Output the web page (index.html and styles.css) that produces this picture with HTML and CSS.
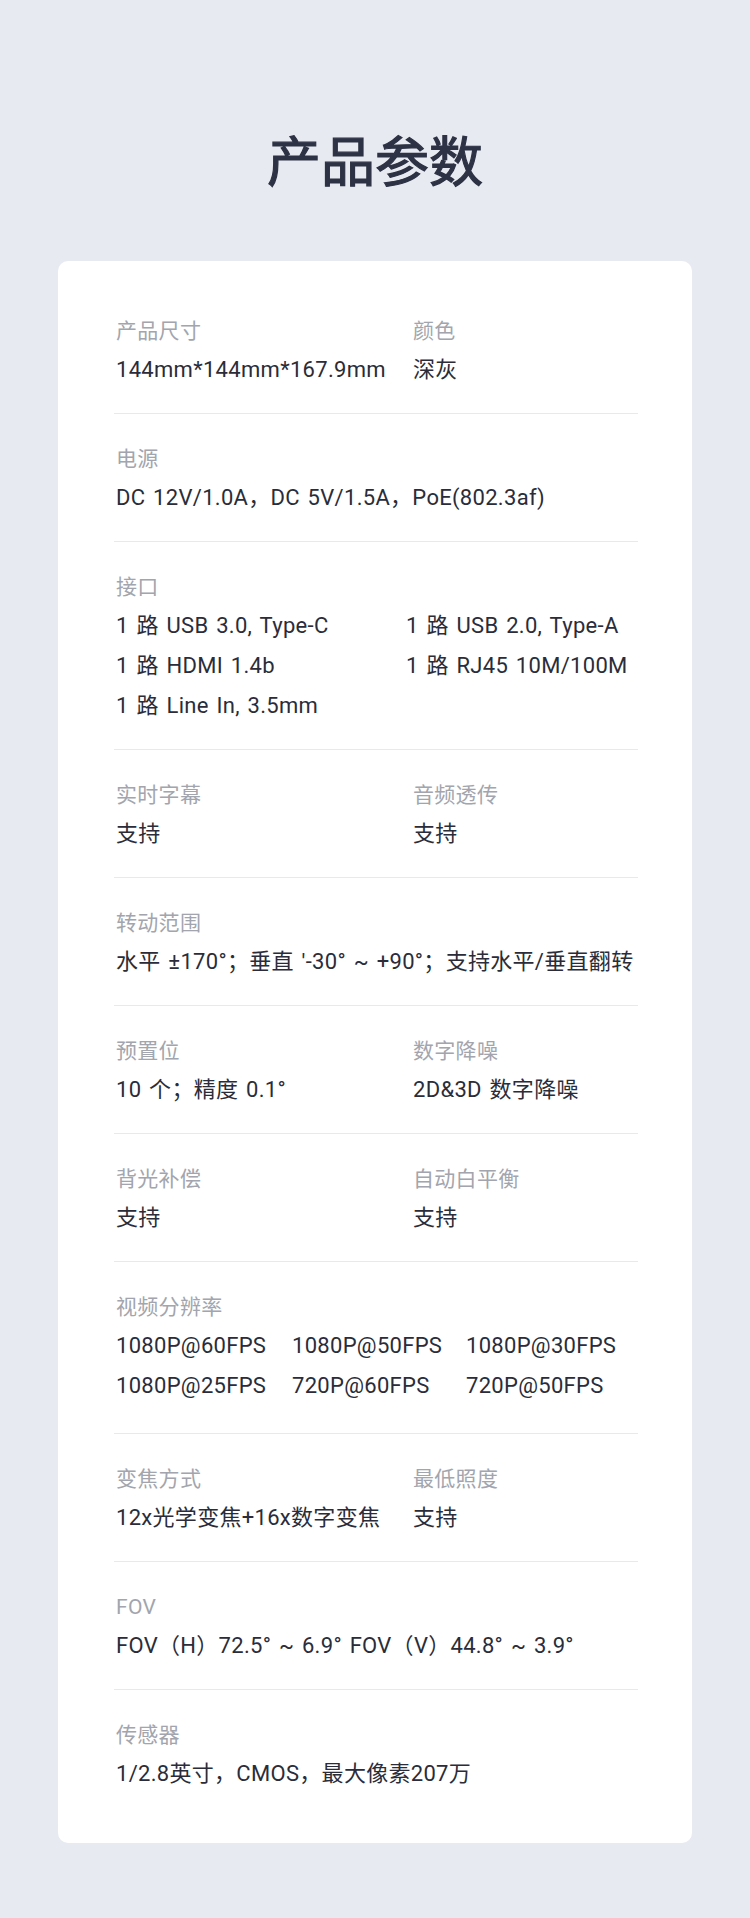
FILE: index.html
```html
<!DOCTYPE html>
<html lang="zh-CN">
<head>
  <meta charset="UTF-8">
  <meta name="viewport" content="width=device-width, initial-scale=1.0">
  <title>产品参数</title>
  <link rel="stylesheet" href="styles.css">
</head>
<body>
  <main class="page">
    <h1 class="page__title">产品参数</h1>

    <section class="spec-card">
      <div class="spec-row spec-row--pair">
        <div class="spec">
          <div class="spec__label">产品尺寸</div>
          <div class="spec__value">144mm*144mm*167.9mm</div>
        </div>
        <div class="spec">
          <div class="spec__label">颜色</div>
          <div class="spec__value">深灰</div>
        </div>
      </div>

      <div class="spec-row">
        <div class="spec__label">电源</div>
        <div class="spec__value">DC 12V/1.0A，DC 5V/1.5A，PoE(802.3af)</div>
      </div>

      <div class="spec-row">
        <div class="spec__label">接口</div>
        <div class="spec__list spec__list--ports">
          <div class="spec__value">1 路 USB 3.0, Type-C</div>
          <div class="spec__value">1 路 USB 2.0, Type-A</div>
          <div class="spec__value">1 路 HDMI 1.4b</div>
          <div class="spec__value">1 路 RJ45 10M/100M</div>
          <div class="spec__value">1 路 Line In, 3.5mm</div>
        </div>
      </div>

      <div class="spec-row spec-row--pair">
        <div class="spec">
          <div class="spec__label">实时字幕</div>
          <div class="spec__value">支持</div>
        </div>
        <div class="spec">
          <div class="spec__label">音频透传</div>
          <div class="spec__value">支持</div>
        </div>
      </div>

      <div class="spec-row">
        <div class="spec__label">转动范围</div>
        <div class="spec__value">水平 ±170°；垂直 '-30° ~ +90°；支持水平/垂直翻转</div>
      </div>

      <div class="spec-row spec-row--pair">
        <div class="spec">
          <div class="spec__label">预置位</div>
          <div class="spec__value">10 个；精度 0.1°</div>
        </div>
        <div class="spec">
          <div class="spec__label">数字降噪</div>
          <div class="spec__value">2D&amp;3D 数字降噪</div>
        </div>
      </div>

      <div class="spec-row spec-row--pair">
        <div class="spec">
          <div class="spec__label">背光补偿</div>
          <div class="spec__value">支持</div>
        </div>
        <div class="spec">
          <div class="spec__label">自动白平衡</div>
          <div class="spec__value">支持</div>
        </div>
      </div>

      <div class="spec-row spec-row--tall">
        <div class="spec__label">视频分辨率</div>
        <div class="spec__list spec__list--modes">
          <div class="spec__value">1080P@60FPS</div>
          <div class="spec__value">1080P@50FPS</div>
          <div class="spec__value">1080P@30FPS</div>
          <div class="spec__value">1080P@25FPS</div>
          <div class="spec__value">720P@60FPS</div>
          <div class="spec__value">720P@50FPS</div>
        </div>
      </div>

      <div class="spec-row spec-row--pair">
        <div class="spec">
          <div class="spec__label">变焦方式</div>
          <div class="spec__value">12x光学变焦+16x数字变焦</div>
        </div>
        <div class="spec">
          <div class="spec__label">最低照度</div>
          <div class="spec__value">支持</div>
        </div>
      </div>

      <div class="spec-row">
        <div class="spec__label">FOV</div>
        <div class="spec__value">FOV（H）72.5° ~ 6.9° FOV（V）44.8° ~ 3.9°</div>
      </div>

      <div class="spec-row">
        <div class="spec__label">传感器</div>
        <div class="spec__value">1/2.8英寸，CMOS，最大像素207万</div>
      </div>
    </section>
  </main>
</body>
</html>
```

FILE: styles.css
```css
:root {
  --bg: #e7eaf1;
  --ink: #2a2d39;
  --muted: #a2a5ad;
  --line: #e6eaf0;
}

* {
  box-sizing: border-box;
}

html, body {
  margin: 0;
  padding: 0;
  background: var(--bg);
  font-family: Roboto, "Noto Sans CJK SC", sans-serif;
  color: var(--ink);
}

.page {
  padding: 129px 0 76px;
}

.page__title {
  margin: 0 0 72px;
  font-size: 54px;
  line-height: 60px;
  font-weight: 400;
  -webkit-text-stroke: 1.2px #2d3244;
  text-align: center;
  color: #2d3244;
  font-family: "Noto Sans CJK SC", sans-serif;
}

.spec-card {
  margin: 0 58px;
  padding: 25px 54px 26px 56px;
  background: #fff;
  border-radius: 10px;
}

.spec-row {
  padding: 26px 0 23px 2px;
  border-bottom: 1px solid var(--line);
}

.spec-row:last-child {
  border-bottom: 0;
}

.spec-row--pair {
  display: grid;
  grid-template-columns: 297px 1fr;
}

.spec-row--tall {
  padding-bottom: 27px;
}

.spec__label {
  font-size: 21px;
  line-height: 38px;
  letter-spacing: 0.3px;
  color: var(--muted);
}

.spec__value {
  font-size: 22px;
  line-height: 40px;
  letter-spacing: 0.3px;
  word-spacing: 2px;
  color: var(--ink);
  white-space: nowrap;
}

.spec__list {
  display: grid;
}

.spec__list--ports {
  grid-template-columns: 290px 1fr;
}

.spec__list--modes {
  grid-template-columns: 176px 174px 1fr;
}
```
